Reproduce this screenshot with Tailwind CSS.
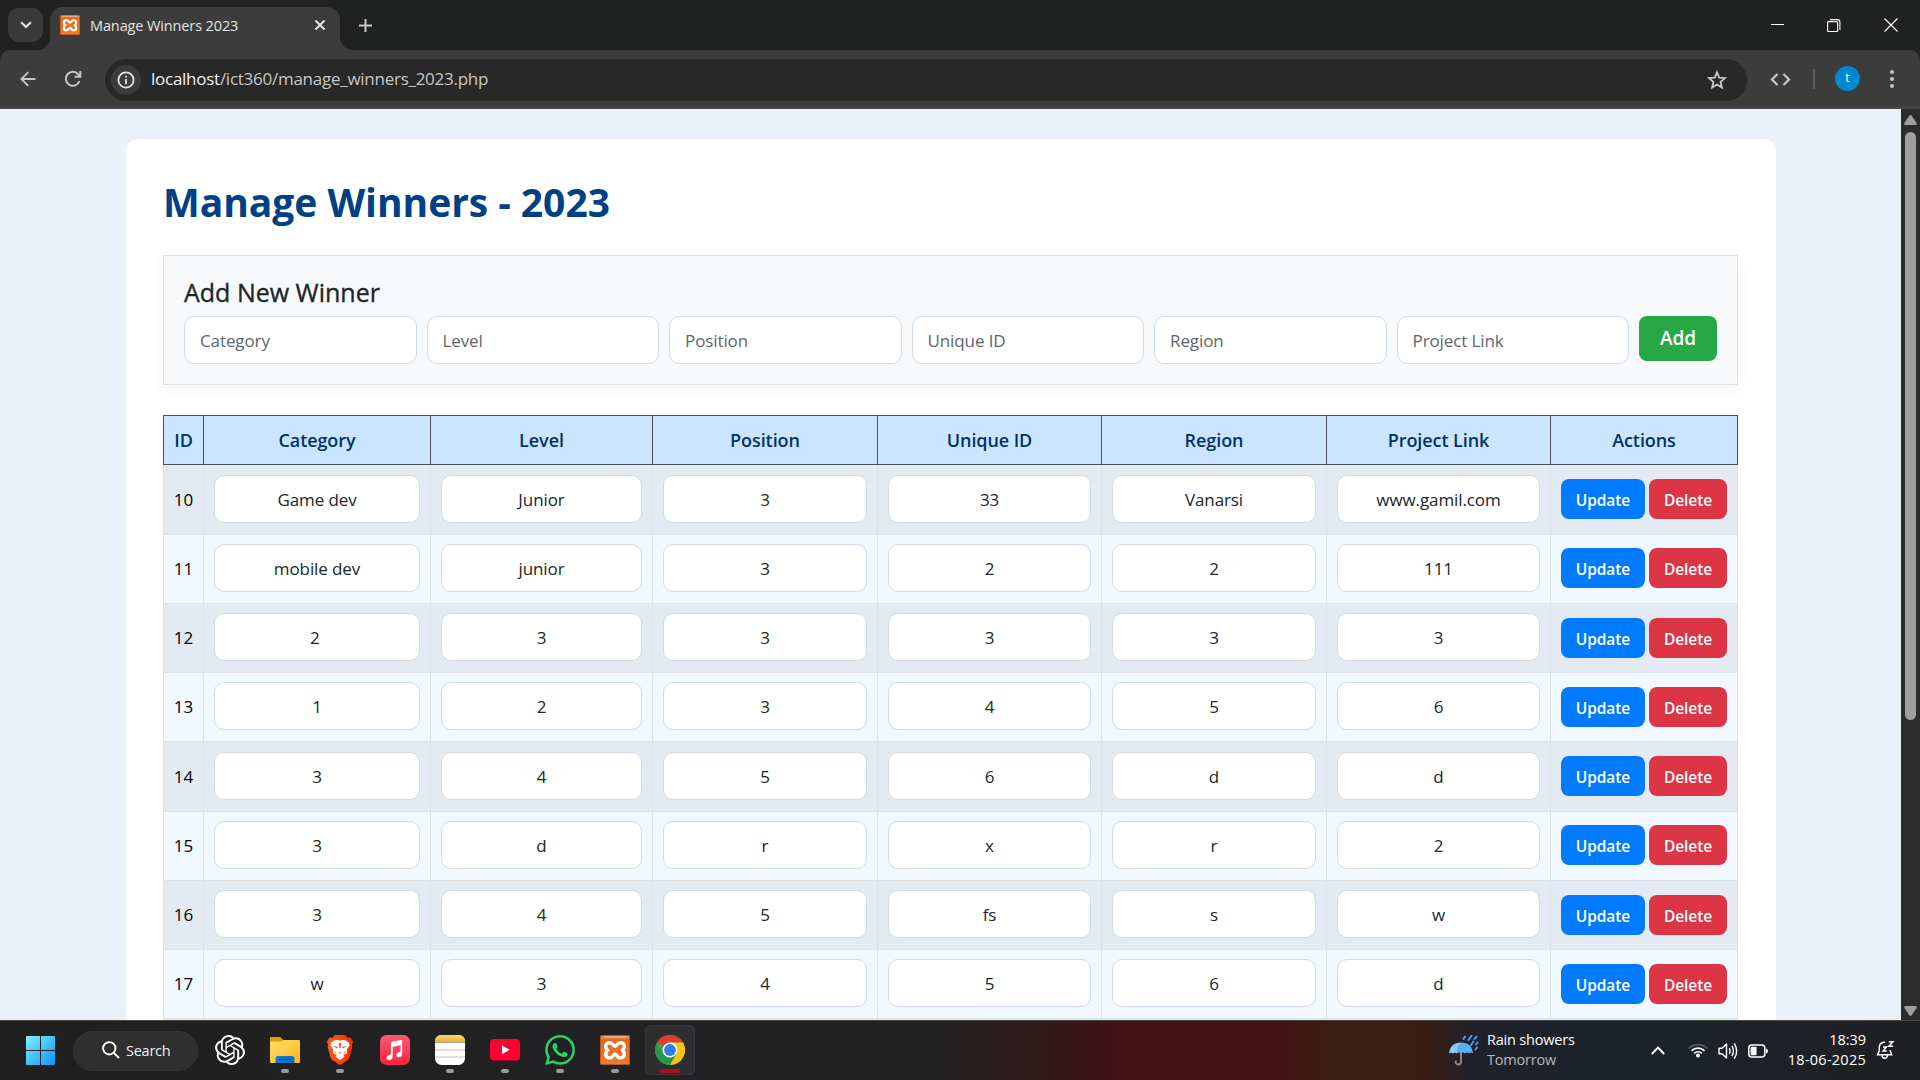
<!DOCTYPE html>
<html lang="en">
<head>
<meta charset="utf-8">
<title>Manage Winners 2023</title>
<script src="https://cdn.jsdelivr.net/npm/@tailwindcss/browser@4"></script>
</head>
<body class="w-[1920px] h-[1080px] overflow-hidden flex flex-col bg-[#202221] font-['Open_Sans','Noto_Sans',sans-serif]">
<svg class="absolute" width="0" height="0">
  <defs>
    <linearGradient id="xg" x1="0" y1="0" x2="0" y2="1"><stop offset="0" stop-color="#e9935a"/><stop offset=".15" stop-color="#e8651c"/><stop offset="1" stop-color="#ee7b2c"/></linearGradient>
    <symbol id="xampp" viewBox="0 0 30 30">
      <rect width="30" height="30" rx="1.5" fill="#b9561a"/><rect x="1" y="1" width="28" height="28" rx="1" fill="url(#xg)"/>
      <rect x="4" y="1.2" width="22" height="1.6" rx=".8" fill="#f0b087"/>
      <path d="M9.5 7.7C13.4 7.7 12.6 11.2 15 11.2S16.6 7.7 20.5 7.7C24.6 7.7 25.6 12.3 22.4 15.2 25.6 18.2 24.6 23 20.5 23 16.6 23 17.4 19.3 15 19.3S13.4 23 9.5 23C5.4 23 4.4 18.2 7.6 15.2 4.4 12.3 5.4 7.7 9.5 7.7Z" fill="none" stroke="#fff" stroke-width="3.4"/>
    </symbol>
  </defs>
</svg>

<!-- Tab strip -->
<div class="h-[50px] shrink-0 flex items-end bg-[#202221]">
  <div class="w-[43px] h-[42px] ml-2 mr-[-1px] flex-none">
    <div class="w-[35px] h-[34px] rounded-[11px] bg-[#3a3a3a] flex items-center justify-center">
      <svg width="12" height="8" viewBox="0 0 12 8" fill="none" stroke="#e3e3e3" stroke-width="2.2"><path d="M1.2 1.2 6 6 10.8 1.2"/></svg>
    </div>
  </div>
  <div class="relative w-[290px] h-[43px] rounded-t-[13px] bg-[#3c3c3c] flex items-center pl-[10px] pb-[7px]">
    <svg class="absolute -left-[13px] bottom-0" width="13" height="13"><path d="M13 0V13H0A13 13 0 0 0 13 0Z" fill="#3c3c3c"/></svg>
    <svg class="absolute -right-[13px] bottom-0" width="13" height="13"><path d="M0 0V13H13A13 13 0 0 1 0 0Z" fill="#3c3c3c"/></svg>
    <svg width="20" height="20"><use href="#xampp"/></svg>
    <span class="ml-[10px] mt-[2px] w-[214px] text-[14.5px] leading-5 tracking-[-0.12px] text-[#e3e3e3] whitespace-nowrap">Manage Winners 2023</span>
    <svg class="ml-[10px]" width="12" height="12" viewBox="0 0 12 12" stroke="#e3e3e3" stroke-width="2"><path d="M1.5 1.5 10.500 10.500M10.500 1.500 1.500 10.500"/></svg>
  </div>
  <svg class="ml-[19px] mb-[18px]" width="13" height="13" viewBox="0 0 13 13" stroke="#c7c7c7" stroke-width="2"><path d="M6.500 0V13M0 6.500H13"/></svg>
  <div class="ml-auto h-full flex items-center gap-[43px] pr-[22px]">
    <svg width="13" height="13" stroke="#fff"><path d="M0 5.500H13"/></svg>
    <svg width="14" height="13" fill="none" stroke="#fff" stroke-width="1.1"><rect x=".6" y="2.600" width="10" height="10" rx="1"/><path d="M3 .6H10.500Q12.900 .6 12.900 3V11"/></svg>
    <svg width="14" height="14" stroke="#fff" stroke-width="1.1"><path d="M.5 .5 13.500 13.500M13.500 .5 .5 13.500"/></svg>
  </div>
</div>

<!-- Toolbar -->
<div class="h-[59px] shrink-0 bg-[#202221]">
<div class="h-full bg-[#3c3c3c] rounded-t-[10px] border-b-2 border-[#474747] flex items-center pl-5">
  <svg width="16" height="16" viewBox="0 0 16 16" fill="none" stroke="#c7c7c7" stroke-width="1.900"><path d="M15.500 8H1.500M8.200 1.200 1.400 8l6.800 6.800"/></svg>
  <svg class="ml-[28px]" width="18" height="18" viewBox="0 0 18 18" fill="none" stroke="#c7c7c7" stroke-width="2"><path d="M15.500 11A7 7 0 1 1 14.600 4.800L16 6.300M16.300 1V6.800H10.600"/></svg>
  <div class="ml-[23px] mt-[2px] w-[1642px] h-[42px] rounded-full bg-[#282828] flex items-center pl-[6px] pr-5">
    <div class="size-[30px] rounded-full bg-[#3c3c3c] flex items-center justify-center">
      <svg width="18" height="18" viewBox="0 0 18 18" fill="none" stroke="#e3e3e3" stroke-width="1.800"><circle cx="9" cy="9" r="7.600"/><path d="M9 8V13.200M9 4.700V6.500"/></svg>
    </div>
    <div class="ml-[10px] -mt-px text-[17px] leading-6 tracking-[-0.26px] text-[#c7c7c7]"><span class="text-[#f1f1f1]">localhost</span>/ict360/manage_winners_2023.php</div>
    <svg class="ml-auto" width="20" height="20" viewBox="0 0 20 20" fill="none" stroke="#c7c7c7" stroke-width="1.800"><path d="M10 2.300 12.200 7.600 18 8.100 13.600 11.900 14.900 17.500 10 14.500 5.100 17.500 6.400 11.900 2 8.100 7.800 7.600Z"/></svg>
  </div>
  <svg class="ml-[23px] mt-[2px]" width="21" height="13" viewBox="0 0 21 13" fill="none" stroke="#c7c7c7" stroke-width="2.200"><path d="M7.500 1 2 6.500 7.500 12M13.500 1 19 6.500 13.500 12"/></svg>
  <div class="ml-[22px] w-[2px] h-5 bg-[#5c5c5c]"></div>
  <div class="ml-[20px] size-[25px] rounded-full bg-[#0288d1] text-white text-[12.500px] leading-none flex items-center justify-center pb-px">t</div>
  <svg class="ml-[30px]" width="4" height="18" fill="#c7c7c7"><circle cx="2" cy="2" r="2"/><circle cx="2" cy="9" r="2"/><circle cx="2" cy="16" r="2"/></svg>
</div>
</div>

<!-- Page viewport -->
<div class="h-[911px] shrink-0 flex overflow-hidden bg-[#e9f1fb]">
  <div class="w-[1901px] pt-[30px] pl-[126px]">
    <div class="w-[1650px] h-[1100px] rounded-[12px] bg-white pt-[36px] px-[37px]">
      <h1 class="h-[54px] text-[39px] leading-[54px] font-bold text-[#004085] whitespace-nowrap tracking-[-0.04px]">Manage Winners - 2023</h1>
      <form class="mt-[26px] h-[130px] w-[1575px] border border-[#dee2e6] bg-[#f8f9fa] px-5 pt-[20px] shadow-[0_4px_14px_rgba(0,0,0,0.05)]">
        <h2 class="h-[32px] text-[25px] leading-[32px] font-medium text-[#212529] [-webkit-text-stroke:0.35px_#212529]">Add New Winner</h2>
        <div id="fields" class="mt-[8px] flex items-start gap-[10px]"></div>
      </form>
      <div id="grid" class="mt-[30px] w-[1575px] border-l border-[#dee2e6]"></div>
    </div>
  </div>
  <div class="w-[19px] bg-[#2c2c2c] flex flex-col items-center">
    <svg class="mt-[6px]" width="13" height="10" fill="#9f9f9f"><path d="M6.500 0Q7.300 0 7.900 .9L12.600 8Q13.300 10 11.500 10H1.500Q-.3 10 .4 8L5.100 .9Q5.700 0 6.500 0Z"/></svg>
    <div class="mt-[7px] w-[11px] h-[588px] rounded-full bg-[#9f9f9f]"></div>
    <svg class="mt-auto mb-[4px] rotate-180" width="13" height="10" fill="#9f9f9f"><path d="M6.500 0Q7.300 0 7.900 .9L12.600 8Q13.300 10 11.500 10H1.500Q-.3 10 .4 8L5.100 .9Q5.700 0 6.500 0Z"/></svg>
  </div>
</div>

<!-- Taskbar -->
<div class="h-[60px] shrink-0 border-t border-[#484848] flex items-center bg-[linear-gradient(90deg,#202020_0px,#222224_700px,#202120_800px,#212120_940px,#2e1d1f_1010px,#351719_1060px,#431214_1130px,#451214_1270px,#3b1d14_1330px,#391d15_1430px,#20212a_1475px,#1c212c_1600px,#1f2126_1800px,#1f2022_1920px)]">
  <svg class="ml-[26px]" width="29" height="29" viewBox="0 0 29 29"><defs><linearGradient id="wg" x1="0" y1="0" x2="1" y2="1"><stop offset="0" stop-color="#7ff2ff"/><stop offset="1" stop-color="#0d93fb"/></linearGradient></defs><path fill="url(#wg)" d="M1 0H14V14H0V1Q0 0 1 0ZM15 0H28Q29 0 29 1V14H15ZM0 15H14V29H1Q0 29 0 28ZM15 15H29V28Q29 29 28 29H15Z"/></svg>
  <div class="ml-[18px] w-[125px] h-10 rounded-full bg-[#2f2f2f] border border-[#343434] flex items-center pl-[28px]">
    <svg class="-mt-[2px]" width="18" height="18" viewBox="0 0 18 18" fill="none" stroke="#fff" stroke-width="1.900"><circle cx="7.300" cy="7.300" r="6.200"/><path d="M11.800 11.800 17 17"/></svg>
    <span class="ml-[6px] text-[14.500px] leading-5 text-[#f0f0f0] tracking-[-0.25px]">Search</span>
  </div>
  <div id="apps" class="ml-[7px] flex gap-[5px]"></div>
  <div class="ml-[754px] flex items-center">
    <svg width="30" height="31" viewBox="0 0 30 31" fill="none"><path d="M12 8V26.500Q12 29.500 9.300 29.500T6.800 26.500V25.500" stroke="#8b8b8b" stroke-width="1.900"/><path d="M0 18.500Q1 7.500 12 7.500T24 18.500Q22 16.500 20 18.500Q18 16.500 16 18.500Q14 16.500 12 18.500Q10 16.500 8 18.500Q6 16.500 4 18.500Q2 16.500 0 18.500Z" fill="#5aaef5"/><path d="M8 18.500Q8 10 12 7.500Q3 8 0 18.500Q2 16.500 4 18.500Q6 16.500 8 18.500Z" fill="#8ccaff"/><path d="M14.500 4 16 1.500M19.500 5 22.500 .8M25.500 4 27.500 1.500M22 10 24.500 6.500M27 9.500 28.500 7.500M26.500 14.500 28 12.500" stroke="#4ba3f5" stroke-width="1.900" stroke-linecap="round"/></svg>
    <div class="ml-[8px] w-[90px] text-[14.500px] leading-[20px] whitespace-nowrap tracking-[-0.2px] -mt-px"><div class="text-white">Rain showers</div><div class="text-[#b5b8bd]">Tomorrow</div></div>
  </div>
  <svg class="ml-[74px]" width="14" height="9" fill="none" stroke="#fff" stroke-width="1.900"><path d="M.8 8 7 1.600 13.200 8"/></svg>
  <svg class="ml-[23px] mb-[2px]" width="20" height="16" viewBox="0 0 20 16" fill="none" stroke-width="1.700"><path d="M.8 6.500A13 13 0 0 1 19.200 6.500" stroke="#555a62"/><path d="M3.500 8.800A9.200 9.200 0 0 1 16.500 8.800M6.200 11.300A5.400 5.400 0 0 1 13.800 11.300" stroke="#fff"/><circle cx="10" cy="13.600" r="2" fill="#fff"/></svg>
  <svg class="ml-[10px]" width="20" height="18" viewBox="0 0 20 18" fill="none" stroke="#fff" stroke-width="1.400"><path d="M1 6.300H4L8.500 2V16L4 11.700H1Z" stroke-linejoin="round"/><path d="M11.300 6.200Q13 9 11.300 11.800M13.900 3.800Q17 9 13.900 14.200M16.300 1.300Q21 9 16.300 16.700"/></svg>
  <svg class="ml-[10px]" width="20" height="14" viewBox="0 0 20 14"><rect x=".8" y="1" width="16" height="12" rx="3" fill="none" stroke="#fff" stroke-width="1.500"/><rect x="2.600" y="2.800" width="6" height="8.400" rx="1" fill="#fff"/><path d="M18 4.500Q20 5 20 7T18 9.500Z" fill="#fff"/></svg>
  <div class="ml-[18px] w-[80px] text-right text-[14.500px] leading-[20px] text-white whitespace-nowrap -mt-px"><div class="tracking-[-0.02px]">18:39</div><div class="tracking-[0.25px]">18-06-2025</div></div>
  <svg class="ml-[10px] -mt-px" width="19" height="20" viewBox="0 0 19 20" fill="none" stroke="#fff" stroke-width="1.400"><path d="M9 2.200H8Q3.500 2.500 3.200 7.500V11L1.500 14.800H15.800L14.200 11V10M5.800 15Q6.200 18.300 8.700 18.300T11.700 15M7 7H10.500L7 11H10.700M12.700 1.700H17L12.700 6.300H17.200"/></svg>
</div>

<script>
const labels = ['Category','Level','Position','Unique ID','Region','Project Link'];
document.getElementById('fields').innerHTML = labels.map(l =>
  `<div class="flex-1 h-[48px] rounded-[10px] border border-[#cfdce8] bg-white pl-[15px] text-[17px] leading-[47px] tracking-[-0.1px] text-[#5f666d]">${l}</div>`).join('') +
  `<div class="w-[78px] h-[45px] rounded-[8px] bg-[#28a745] text-white font-semibold text-[19px] leading-[45px] text-center">Add</div>`;

const rows = [
  ['10','Game dev','Junior','3','33','Vanarsi','www.gamil.com'],
  ['11','mobile dev','junior','3','2','2','111'],
  ['12','2&nbsp;','3','3','3','3','3'],
  ['13','1','2','3','4','5','6'],
  ['14','3','4','5','6','d','d'],
  ['15','3','d','r','x','r','2'],
  ['16','3','4','5','fs','s','w'],
  ['17','w','3','4','5','6','d']
];
const header = `<div class="relative -ml-px -mb-[0.4px] w-[1575px] h-[50px] border-y border-l border-[#495057] bg-[#cce5ff] grid grid-cols-[40px_227px_222px_225px_224px_225px_224px_187px] text-center text-[18px] leading-[49px] font-semibold tracking-[-0.08px] text-[#003366]">` +
  ['ID', ...labels, 'Actions'].map(h => `<div class="h-[48px] border-r border-[#495057]">${h}</div>`).join('') + `</div>`;
document.getElementById('grid').innerHTML = header + rows.map((r, i) =>
  `<div class="h-[69.28px] grid grid-cols-[40px_227px_222px_225px_224px_225px_224px_187px] text-center text-[17px] text-[#212529] ${i % 2 ? 'bg-[#f1f8ff]' : 'bg-[#e4eaf2]'}">` +
  r.map((c, j) => j === 0
    ? `<div class="border-r border-b border-[#dee2e6] leading-[69px] text-black">${c}</div>`
    : `<div class="border-r border-b border-[#dee2e6] p-[10px]"><div class="h-[48px] rounded-[10px] border border-[#cfdce8] bg-white leading-[47.5px] tracking-[-0.1px]">${c}</div></div>`).join('') +
  `<div class="border-r border-b border-[#dee2e6] pl-[10px] flex items-center gap-[4px] text-white text-[15.5px] font-semibold leading-[42px] tracking-[-0.1px]">
     <div class="w-[84px] h-[40px] rounded-[8px] bg-[#007bff]">Update</div>
     <div class="w-[78px] h-[40px] rounded-[8px] bg-[#dc3545]">Delete</div></div></div>`).join('') +
  `<div class="h-[69.28px] w-[1574px] border-r border-[#dee2e6] bg-[#e4eaf2]"></div>`;

const apps = [
  // ChatGPT
  [0, `<svg width="30" height="30" viewBox="0 0 24 24" fill="#fff"><path d="M22.2819 9.8211a5.9847 5.9847 0 0 0-.5157-4.9108 6.0462 6.0462 0 0 0-6.5098-2.9A6.0651 6.0651 0 0 0 4.9807 4.1818a5.9847 5.9847 0 0 0-3.9977 2.9 6.0462 6.0462 0 0 0 .7427 7.0966 5.98 5.98 0 0 0 .511 4.9107 6.051 6.051 0 0 0 6.5146 2.9001A5.9847 5.9847 0 0 0 13.2599 24a6.0557 6.0557 0 0 0 5.7718-4.2058 5.9894 5.9894 0 0 0 3.9977-2.9001 6.0557 6.0557 0 0 0-.7475-7.0729zm-9.022 12.6081a4.4755 4.4755 0 0 1-2.8764-1.0408l.1419-.0804 4.7783-2.7582a.7948.7948 0 0 0 .3927-.6813v-6.7369l2.02 1.1686a.071.071 0 0 1 .038.052v5.5826a4.504 4.504 0 0 1-4.4945 4.4944zm-9.6607-4.1254a4.4708 4.4708 0 0 1-.5346-3.0137l.142.0852 4.783 2.7582a.7712.7712 0 0 0 .7806 0l5.8428-3.3685v2.3324a.0804.0804 0 0 1-.0332.0615L9.74 19.9502a4.4992 4.4992 0 0 1-6.1408-1.6464zM2.3408 7.8956a4.485 4.485 0 0 1 2.3655-1.9728V11.6a.7664.7664 0 0 0 .3879.6765l5.8144 3.3543-2.0201 1.1685a.0757.0757 0 0 1-.071 0l-4.8303-2.7865A4.504 4.504 0 0 1 2.3408 7.872zm16.5963 3.8558L13.1038 8.364 15.1192 7.2a.0757.0757 0 0 1 .071 0l4.8303 2.7913a4.4944 4.4944 0 0 1-.6765 8.1042v-5.6772a.79.79 0 0 0-.407-.667zm2.0107-3.0231l-.142-.0852-4.7735-2.7818a.7759.7759 0 0 0-.7854 0L9.409 9.2297V6.8974a.0662.0662 0 0 1 .0284-.0615l4.8303-2.7866a4.4992 4.4992 0 0 1 6.6802 4.66zM8.3065 12.863l-2.02-1.1638a.0804.0804 0 0 1-.038-.0567V6.0742a4.4992 4.4992 0 0 1 7.3757-3.4537l-.142.0805L8.704 5.459a.7948.7948 0 0 0-.3927.6813zm1.0976-2.3654l2.602-1.4998 2.6069 1.4998v2.9994l-2.5974 1.4997-2.6067-1.4997Z"/></svg>`],
  // File Explorer
  [1, `<svg width="30" height="30" viewBox="0 0 30 30"><defs><linearGradient id="fg" x1="0" y1="0" x2="1" y2="1"><stop offset="0" stop-color="#ffde6e"/><stop offset="1" stop-color="#fcb913"/></linearGradient><linearGradient id="fb" x1="0" y1="0" x2="1" y2="0"><stop offset="0" stop-color="#0a84dd"/><stop offset="1" stop-color="#0f6bbf"/></linearGradient></defs><path d="M1 2H9.500Q10.500 2 11.300 3L13 5V8H0V3Q0 2 1 2Z" fill="#dd9f08"/><path d="M0 6.500H11L13.500 5H29Q30 5 30 6V27Q30 28 29 28H1Q0 28 0 27Z" fill="url(#fg)"/><path d="M5.500 28V23.500Q5.500 21 8 21H22Q24.500 21 24.500 23.500V28Z" fill="url(#fb)"/><path d="M8.500 24.500H21.500" stroke="#084a87" stroke-width="1.200"/></svg>`],
  // Brave
  [1, `<svg width="26" height="30" viewBox="0 0 26 30"><defs><linearGradient id="bg"><stop offset="0" stop-color="#ff5a1a"/><stop offset="1" stop-color="#fa2a00"/></linearGradient></defs><path d="M8 0H18L20.500 2.800 23.500 2.500 26 6.500 25 9.500 25.300 12 22.500 22.500Q21.800 24 20.500 25L14.500 29.300Q13 30.300 11.500 29.300L5.500 25Q4.200 24 3.500 22.500L.7 12 1 9.500 0 6.500 2.500 2.500 5.500 2.800Z" fill="url(#bg)"/><path d="M13 5.600 17.500 4.800 22 7.500 22.600 10.500 19.900 14.500 20.200 18.300 16.300 20 17.500 21.800 13 25 8.500 21.800 9.700 20 5.800 18.300 6.100 14.500 3.400 10.500 4 7.500 8.500 4.800Z" fill="#fff"/><path d="M6.500 10.800 10.800 12 9.800 13.400ZM19.500 10.800 15.200 12 16.200 13.400ZM12 8H14L13.600 13H12.400ZM10.800 16.500 13 17.800 15.200 16.500 13 18.900ZM7.500 16.200 10 18.300 8.500 18.300ZM18.500 16.200 16 18.300 17.500 18.300Z" fill="#fb4310"/></svg>`],
  // Music
  [0, `<svg width="30" height="30" viewBox="0 0 30 30"><defs><linearGradient id="mg" x1="0" y1="0" x2="0" y2="1"><stop offset="0" stop-color="#fb5b74"/><stop offset="1" stop-color="#fa233b"/></linearGradient></defs><rect width="30" height="30" rx="6.500" fill="url(#mg)"/><path d="M11 8.200Q11 7 12.200 6.700L21 4.900Q22.200 4.800 22.200 5.800V18.500Q22.200 22 18.800 22.300 16.200 22.300 16.200 20 16.200 17.800 19 17.300 20.600 17 20.600 15.800V10.200L12.700 11.800V21.200Q12.700 24.700 9.200 25 6.500 25 6.500 22.700 6.500 20.500 9.300 20 11 19.700 11 18.500Z" fill="#fff"/></svg>`],
  // Notes
  [1, `<svg width="30" height="30" viewBox="0 0 30 30"><defs><linearGradient id="ng" x1="0" y1="0" x2="0" y2="1"><stop offset="0" stop-color="#fbd76c"/><stop offset="1" stop-color="#e8b52e"/></linearGradient></defs><rect width="30" height="30" rx="6.500" fill="#fff"/><path d="M0 7V6.500Q0 0 6.500 0H23.500Q30 0 30 6.500V7Z" fill="url(#ng)"/><path d="M0 7.500H30" stroke="#a9a7a0" stroke-width="1.200"/><path d="M0 15H30M0 22H30" stroke="#d5d5d5" stroke-width="1.500"/></svg>`],
  // YouTube
  [1, `<svg width="30" height="22" viewBox="0 0 30 22"><rect width="30" height="21.500" rx="4" fill="#ff0033"/><path d="M12 6.500 19.800 10.800 12 15.200Z" fill="#fff"/></svg>`],
  // WhatsApp
  [1, `<svg width="30" height="30" viewBox="0 0 24 24" fill="#25d366"><path d="M17.472 14.382c-.297-.149-1.758-.867-2.03-.967-.273-.099-.471-.148-.67.15-.197.297-.767.966-.94 1.164-.173.199-.347.223-.644.075-.297-.15-1.255-.463-2.39-1.475-.883-.788-1.48-1.761-1.653-2.059-.173-.297-.018-.458.13-.606.134-.133.298-.347.446-.52.149-.174.198-.298.298-.497.099-.198.05-.371-.025-.52-.075-.149-.669-1.612-.916-2.207-.242-.579-.487-.5-.669-.51-.173-.008-.371-.01-.57-.01-.198 0-.52.074-.792.372-.272.297-1.04 1.016-1.04 2.479 0 1.462 1.065 2.875 1.213 3.074.149.198 2.096 3.2 5.077 4.487.709.306 1.262.489 1.694.625.712.227 1.36.195 1.871.118.571-.085 1.758-.719 2.006-1.413.248-.694.248-1.289.173-1.413-.074-.124-.272-.198-.57-.347m-5.421 7.403h-.004a9.87 9.87 0 01-5.031-1.378l-.361-.214-3.741.982.998-3.648-.235-.374a9.86 9.86 0 01-1.51-5.26c.001-5.45 4.436-9.884 9.888-9.884 2.64 0 5.122 1.03 6.988 2.898a9.825 9.825 0 012.893 6.994c-.003 5.45-4.437 9.884-9.885 9.884m8.413-18.297A11.815 11.815 0 0012.05 0C5.495 0 .16 5.335.157 11.892c0 2.096.547 4.142 1.588 5.945L.057 24l6.305-1.654a11.882 11.882 0 005.683 1.448h.005c6.554 0 11.89-5.335 11.893-11.893a11.821 11.821 0 00-3.48-8.413z"/></svg>`],
  // XAMPP
  [1, `<svg width="30" height="30"><use href="#xampp"/></svg>`],
  // Chrome
  [2, `<svg width="30" height="30" viewBox="0 0 30 30"><circle cx="15" cy="15" r="15" fill="#34a853"/><path d="M15 0A15 15 0 0 1 28 7.500H15L8.500 11.250 2 7.500A15 15 0 0 1 15 0Z" fill="#e33b2e"/><path d="M2 7.500A15 15 0 0 0 15 30L21.500 18.750 15 22.500 8.500 18.750Z" fill="#249a48"/><path d="M28 7.500A15 15 0 0 1 15 30L21.500 18.750Q23.500 12 15 7.500Z" fill="#fbc116"/><circle cx="15" cy="15" r="7.500" fill="#fff"/><circle cx="15" cy="15" r="5.900" fill="#2f7cf0"/></svg>`]
];
const marks = ['', '<i class="absolute bottom-[1px] left-[20px] w-2 h-1 rounded-full bg-[#9a9a9a]"></i>', '<i class="absolute bottom-[1px] left-[14px] w-5 h-1 rounded-full bg-[#ad0d19]"></i>'];
document.getElementById('apps').innerHTML = apps.map(([m, svg]) =>
  `<div class="relative size-[50px] -mt-px rounded-[5px] border flex items-center justify-center ${m === 2 ? 'bg-[#2e2e30] border-[#38383a]' : 'border-transparent'}">${svg}${marks[m]}</div>`).join('');
</script>
</body>
</html>
